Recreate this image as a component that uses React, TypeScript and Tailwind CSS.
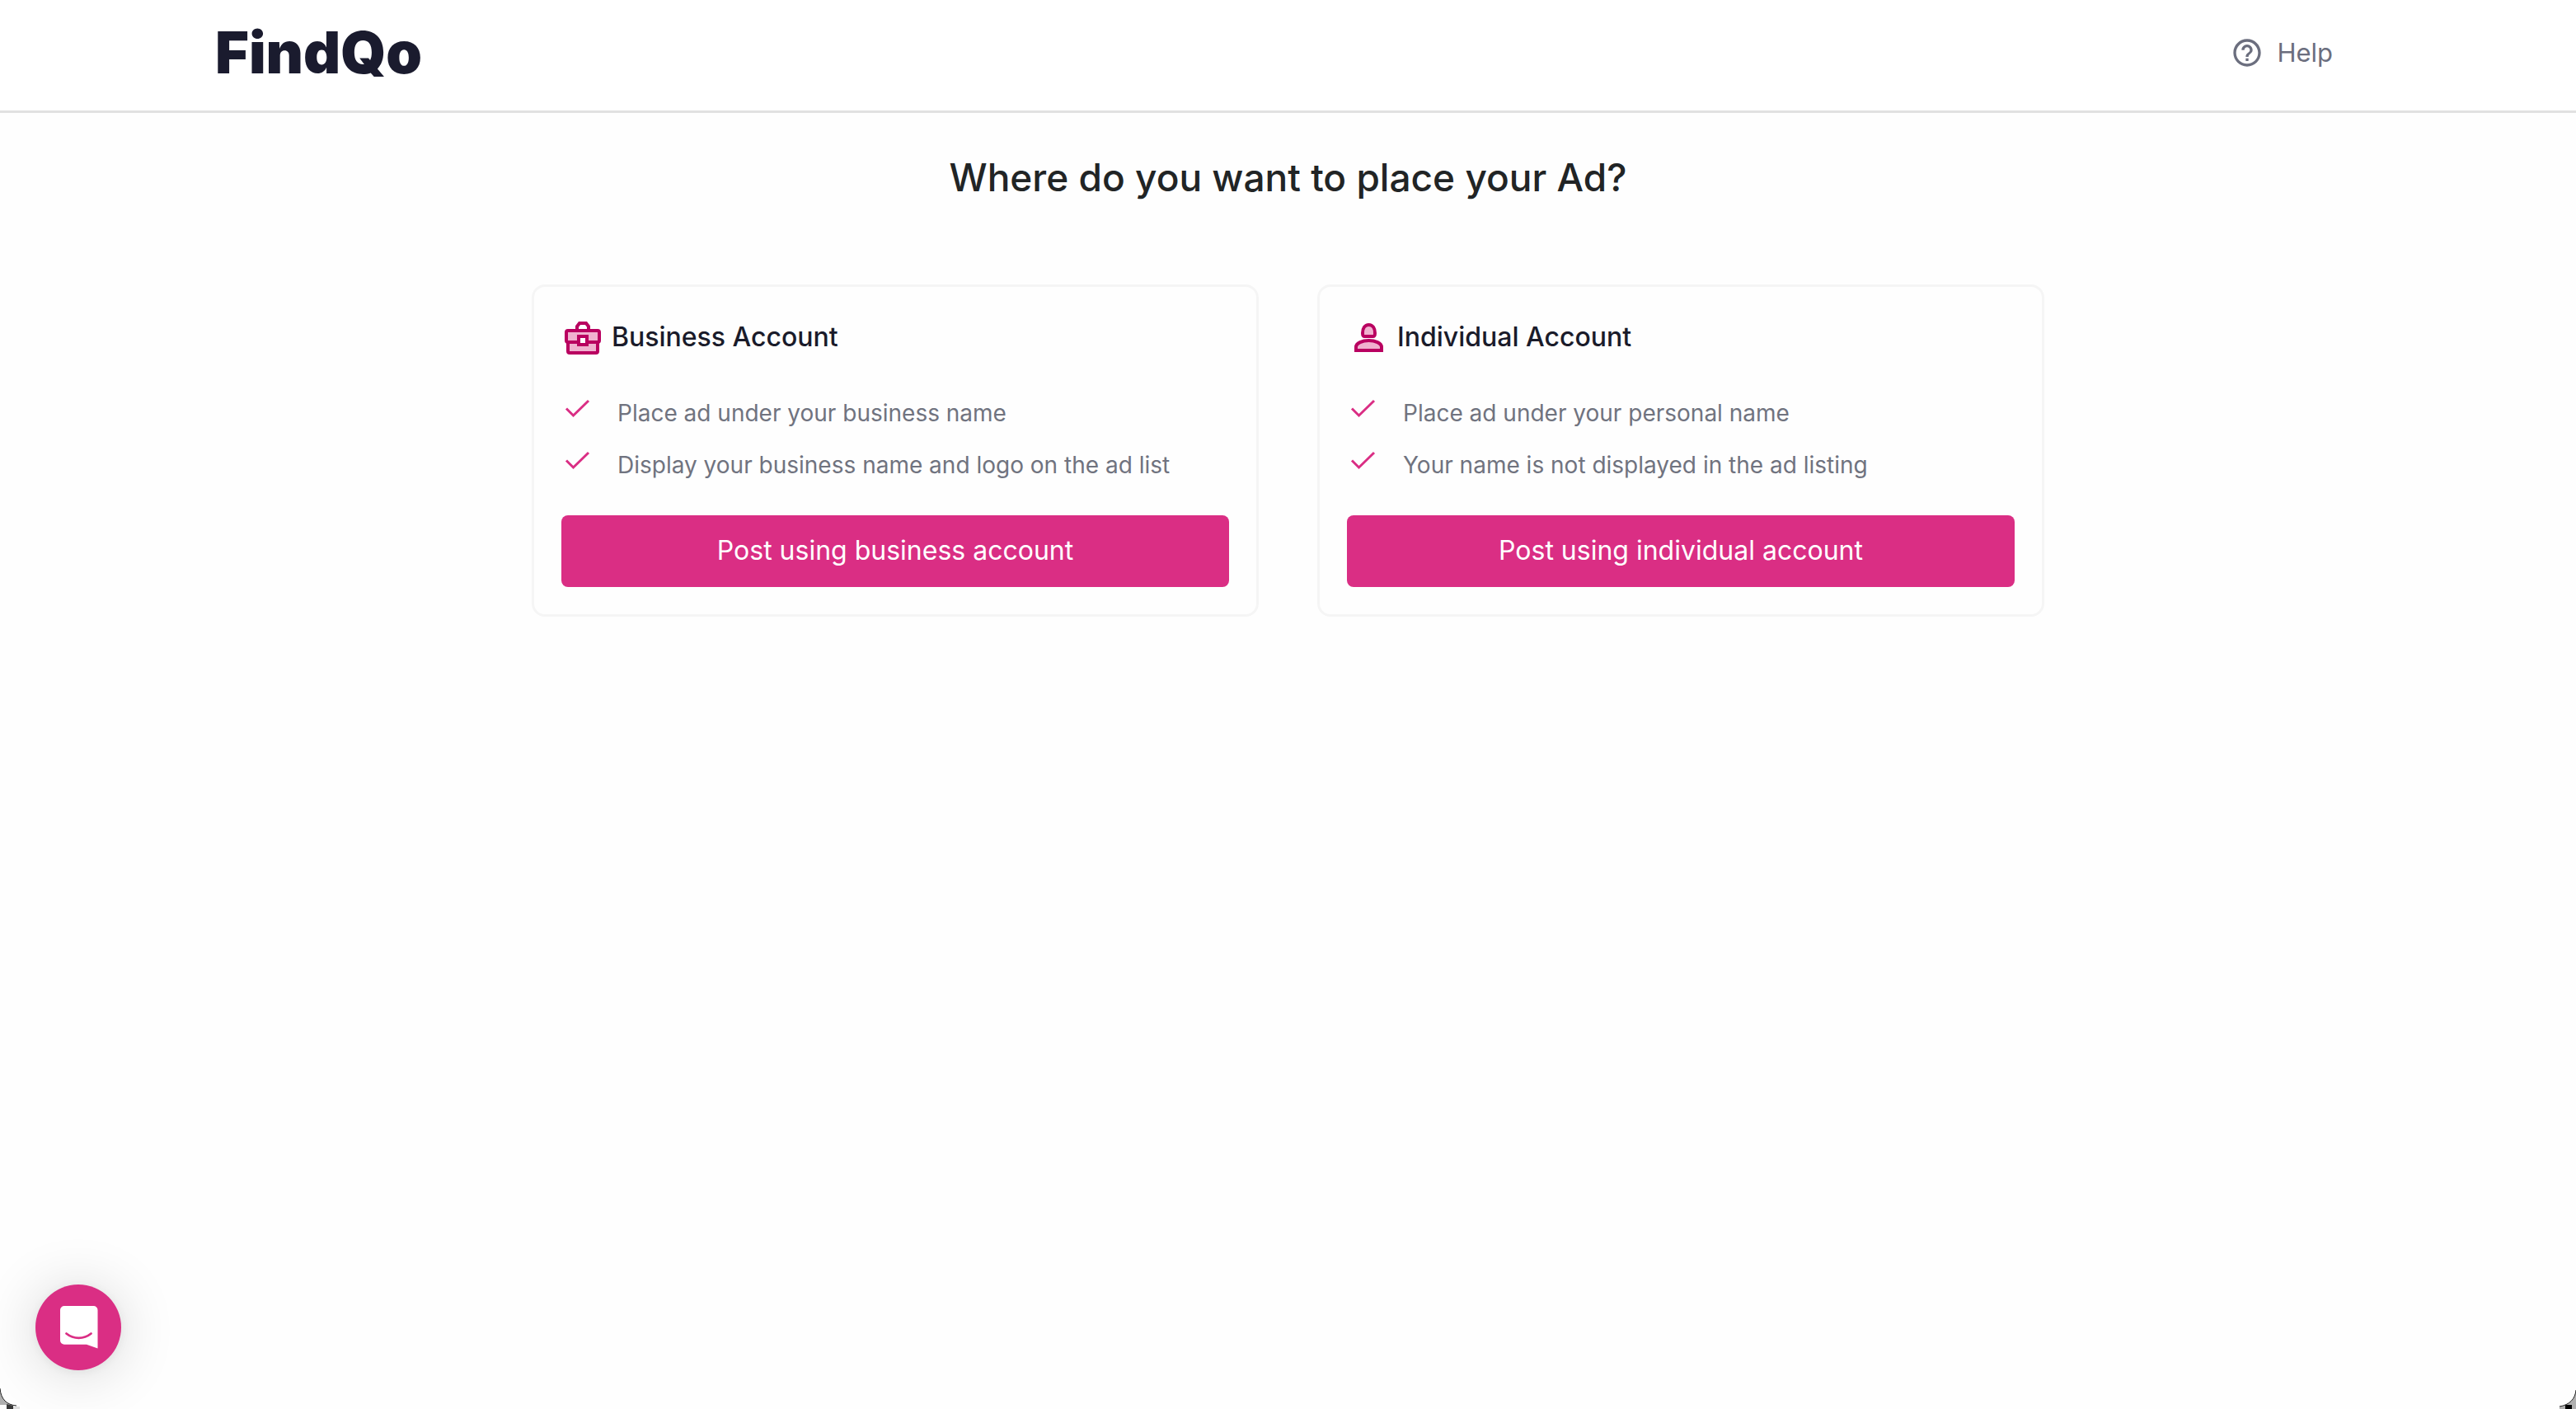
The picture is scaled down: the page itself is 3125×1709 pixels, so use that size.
import type { ReactNode } from "react";

function HelpIcon() {
  return (
    <svg viewBox="0 0 24 24" className="size-10" fill="currentColor" aria-hidden="true">
      <path d="M11 18h2v-2h-2v2zm1-16C6.48 2 2 6.48 2 12s4.48 10 10 10 10-4.48 10-10S17.520 2 12 2zm0 18c-4.410 0-8-3.590-8-8s3.590-8 8-8 8 3.590 8 8-3.590 8-8 8zm0-14c-2.210 0-4 1.790-4 4h2c0-1.100.9-2 2-2s2 .9 2 2c0 2-3 1.750-3 5h2c0-2.250 3-2.500 3-5 0-2.210-1.790-4-4-4z" />
    </svg>
  );
}

function BriefcaseIcon() {
  return (
    <svg viewBox="0 0 44 44" className="size-11" fill="none" stroke="#b90060" strokeWidth="4" aria-hidden="true">
      <path d="M4 27h36v11a2 2 0 0 1-2 2H6a2 2 0 0 1-2-2z" fill="#f0b1cf" />
      <path d="M4 13h36a2 2 0 0 1 2 2v10a2 2 0 0 1-2 2H4a2 2 0 0 1-2-2V15a2 2 0 0 1 2-2z" fill="#f0b1cf" />
      <path d="M15 12V8l3-4h8l3 4v4" />
      <path d="M17 20h10v10H17z" fill="#fff" />
    </svg>
  );
}

function PersonIcon() {
  return (
    <svg viewBox="0 0 44 44" className="size-11" fill="#f0b1cf" stroke="#b90060" strokeWidth="4" aria-hidden="true">
      <path d="M17.500 20h10c2.500 0 2.500-1.500 2.500-4 0-5.500-2.500-10-7.500-10S15 10.500 15 16c0 2.500 0 4 2.500 4z" />
      <path d="M7 37v-4c0-5 8-8 15.500-8S38 28 38 33v4z" />
    </svg>
  );
}

function CheckIcon() {
  return (
    <svg viewBox="0 0 32 32" className="size-8 shrink-0" fill="none" stroke="#da2e84" strokeWidth="3" aria-hidden="true">
      <path d="M2 15.500 10.500 24 29 6" />
    </svg>
  );
}

function AccountCard({ icon, title, points, action }: { icon: ReactNode; title: string; points: string[]; action: string }) {
  return (
    <section className="rounded-2xl border-3 border-[#f5f5f5] bg-[#fefefe] px-[33px] pt-10 pb-[33px]">
      <div className="flex items-center gap-[13px] pl-1">
        {icon}
        <h2 className="pb-0.5 text-[32px] leading-10 font-medium text-[#1a1b2a]">{title}</h2>
      </div>
      <ul className="mt-12 flex flex-col gap-[21px] pl-1">
        {points.map((point) => (
          <li key={point} className="flex items-start gap-8 text-[28px] leading-[42px] text-[#70737f]">
            <CheckIcon />
            {point}
          </li>
        ))}
      </ul>
      <button type="button" className="mt-10 h-[87px] w-full rounded-lg bg-[#da2e84] pb-0.5 text-[32px] leading-10 text-white">
        {action}
      </button>
    </section>
  );
}

export default function App() {
  return (
    <div className="relative min-h-screen overflow-hidden bg-[#fefefe] font-['Inter',sans-serif]">
      <header className="flex items-center justify-between border-b-3 border-[#e1e1e1] bg-white pr-[295px] pb-1.5 pl-[261px]">
        <a href="#" className="text-[70px] leading-[128px] font-black text-[#1a1b2e]">FindQo</a>
        <a href="#" className="flex items-center gap-4 text-[31px] leading-10 text-[#6b6e7e]">
          <HelpIcon />
          Help
        </a>
      </header>

      <main className="pt-12">
        <h1 className="text-center text-[46px] leading-[60px] font-medium text-[#212425]">Where do you want to place your Ad?</h1>
        <div className="mx-auto mt-[100px] grid max-w-[1835px] grid-cols-2 gap-[71px]">
          <AccountCard
            icon={<BriefcaseIcon />}
            title="Business Account"
            points={["Place ad under your business name", "Display your business name and logo on the ad list"]}
            action="Post using business account"
          />
          <AccountCard
            icon={<PersonIcon />}
            title="Individual Account"
            points={["Place ad under your personal name", "Your name is not displayed in the ad listing"]}
            action="Post using individual account"
          />
        </div>
      </main>

      <button
        type="button"
        aria-label="Open chat"
        className="absolute bottom-[47px] left-[43px] size-[104px] rounded-full bg-[#da2e84] shadow-[0_2px_12px_rgba(0,0,0,0.06),0_4px_70px_rgba(0,0,0,0.16)]"
      >
        <svg viewBox="0 0 104 104" className="size-full" aria-hidden="true">
          <path d="M35 26h35.500a5 5 0 0 1 5 5v46.500L62 72.700H35a5 5 0 0 1-5-5V31a5 5 0 0 1 5-5z" fill="#fff" />
          <path d="M37.500 59.500c9 7.200 21 7.200 30 0" fill="none" stroke="#da2e84" strokeWidth="2.800" strokeLinecap="round" />
        </svg>
      </button>

      <svg viewBox="0 0 26 28" className="absolute bottom-0 left-0 h-7 w-[26px]" aria-hidden="true">
        <path d="M0 3C1 16 8 23 20 24H8v-1H0z" fill="#b0b0b0" />
        <path d="M8 22l8 2v4H8z" fill="#383838" />
        <path d="M16 25h8v3h-8z" fill="#e0e0e0" />
        <path d="M0 3C1 16 8 23 20 24" fill="none" stroke="#222" />
      </svg>
      <svg viewBox="0 0 26 28" className="absolute right-0 bottom-0 h-7 w-[26px]" aria-hidden="true">
        <path d="M26 5C25 16 18 23 6 25v3h20z" fill="#b0b0b0" />
        <path d="M13 23h8v5h-8z" fill="#000" />
        <path d="M26 5C25 16 18 23 6 25" fill="none" stroke="#222" />
      </svg>
    </div>
  );
}
